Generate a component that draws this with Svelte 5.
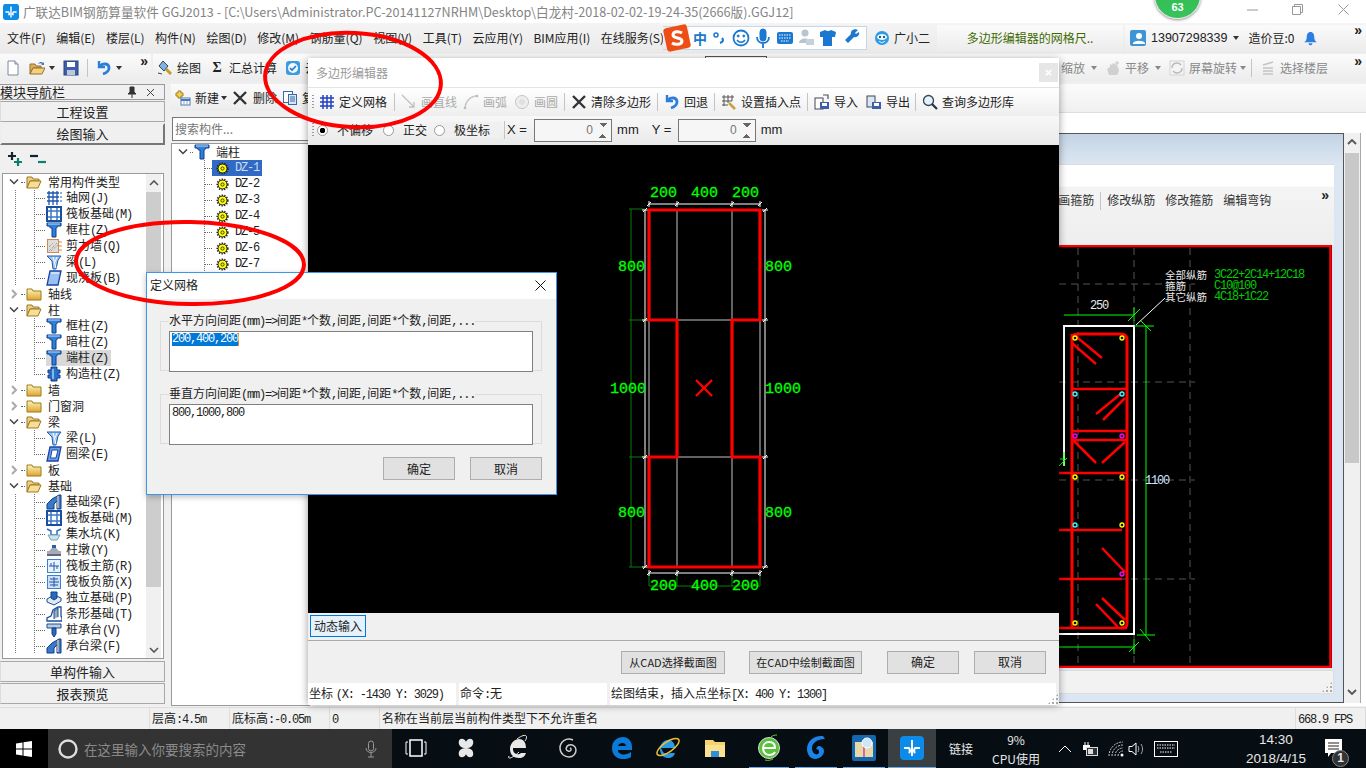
<script>
  const I = {
    col: '<path d="M1 1h14v3h-3l-1.500 2H10v9H6V6H4.500L3 4H1z" fill="#2f7fd6" stroke="#0c3f8f"/><path d="M2 2h12" stroke="#bfe0ff"/>',
    grid: '<path d="M3 1v14M7 1v14M11 1v14M1 3h12M1 7h12M1 11h12" stroke="#1d56b0" stroke-width="1.300" fill="none"/><path d="M15 2v12" stroke="#1d56b0" stroke-dasharray="2 2"/>',
    raft: '<rect x="1" y="1" width="14" height="14" fill="#fff" stroke="#1a4fa0" stroke-width="2"/><path d="M5 2v12M11 2v12M2 5h12M2 11h12" stroke="#3a78c8" stroke-width="1.500"/>',
    wall: '<rect x="1.500" y="1.500" width="11" height="13" fill="#e0dcd8" stroke="#d08a50"/><path d="M3 13l8-8M5 13l7-6M3 9l4-4" stroke="#888" stroke-dasharray="1 1"/><path d="M13 4h3M13 8h3M13 12h3" stroke="#d08a50"/>',
    beam: '<path d="M1 2h14l-3 4-2 9H7L6 7z" fill="#9cc4ee" stroke="#1d5ab0"/><path d="M7 3l3 11M11 3l-2 5" stroke="#fff"/>',
    slab: '<path d="M4 1h11l-3 14H1z" fill="#9cc0f0" stroke="#1744a8" stroke-width="1.300"/><path d="M5 3h8" stroke="#fff"/>',
    ring: '<path d="M4 1h11l-3 14H1z" fill="#6f9fe0" stroke="#1744a8" stroke-width="1.300"/><path d="M6 4h6l-2 8H4.500z" fill="#fff" stroke="#1744a8"/>',
    gzz: '<path d="M5 1h6v3h3v3h-2v2h2v3h-3v3H5v-3H2v-3h2V7H2V4h3z" fill="#2a6fc8" stroke="#0c3f8f"/><path d="M7 3v10" stroke="#dff"/>',
    fbeam: '<path d="M1 15V10l5-5 7-4h2v14h-4V7l-3 3v5z" fill="#3a78c8" stroke="#0c3f8f"/><path d="M12 2v12" stroke="#aaa" stroke-width="2"/>',
    pit: '<path d="M1 3l4 2v4h6V5l4-2" fill="none" stroke="#2a6fc8" stroke-width="1.500"/><path d="M2 9l3 5h6l3-5z" fill="#cfe0f2" stroke="#7aa"/>',
    pier: '<path d="M6 6h4V3H6z" fill="#2a5fa8"/><path d="M3 9l3-3h4l3 3z" fill="#9ab"/><rect x="1" y="9" width="14" height="3" fill="#aab"/><rect x="1" y="12" width="14" height="2" fill="#667"/>',
    zj: '<rect x="1.500" y="1.500" width="13" height="13" fill="#e8f2fc" stroke="#3d7fd0"/><path d="M8 4v9M3 8h10M5 5v3M11 8v3" stroke="#1d56b0" fill="none"/>',
    fj: '<rect x="1.500" y="1.500" width="13" height="13" fill="#cfe0f2" stroke="#3d7fd0"/><path d="M8 3v10M3 8h10M4 5h8M4 11h8" stroke="#1d56b0" fill="none"/>',
    foot: '<path d="M1 9l7-4 7 3v3l-7 4-7-3z" fill="#dfeaf6" stroke="#1d4f9a"/><path d="M5 8V2h6v6l-3 2z" fill="#2d69b8" stroke="#0c3f8f"/>',
    strip: '<path d="M1 15v-3l4-2 2-6 5-3h3v9l1 2v3z" fill="#fff" stroke="#1d4f9a" stroke-width="1.300"/><path d="M8 13V5l4-3v9" fill="#9ab" stroke="#1d4f9a"/>',
    pile: '<path d="M1 2h14v4H1z" fill="#bcd" stroke="#1d4f9a"/><path d="M6 6h4v6l-2 3-2-3z" fill="#2d69b8" stroke="#0c3f8f"/>',
    gear: '<circle cx="8" cy="8" r="5.500" fill="#ff0" stroke="#222" stroke-width="1.200"/><circle cx="8" cy="8" r="6.500" fill="none" stroke="#222" stroke-width="2" stroke-dasharray="1.600 1.600"/><circle cx="8" cy="8" r="2" fill="#ee0" stroke="#222"/>',
    fold: '<path d="M1 3h5l1 2h8v9H1z" fill="url(#fy)" stroke="#a07820"/>',
    open: '<path d="M1 3h5l1 2h6v2H4l-3 7z" fill="#e8d088" stroke="#a07820"/><path d="M4 7h11l-3 7H1z" fill="#f6de98" stroke="#a07820"/>',
    doc: '<path d="M3 1h7l3 3v11H3z" fill="#fff" stroke="#7d8aa0"/><path d="M10 1v3h3" fill="#dde" stroke="#7d8aa0"/>',
    ofold: '<path d="M1 4h5l1 2h5v2H4l-3 6z" fill="#d8b060" stroke="#96702a"/><path d="M4 8h12l-3 6H1z" fill="#f4d07c" stroke="#96702a"/><path d="M9 4c2-3 4-2 5-1l1-1v3h-3l1-1c-1-1-2-1-4 0z" fill="#3a78c8"/>',
    save: '<rect x="1" y="1" width="14" height="14" fill="#3c5fa8" stroke="#27407c"/><rect x="4" y="2" width="8" height="5" fill="#fff"/><rect x="4" y="10" width="8" height="5" fill="#bcc8dc"/>',
    undo: '<path d="M3 1v6h6" fill="none" stroke="#2d7ed6" stroke-width="2.400"/><path d="M4 6c3-3 9-3 9 2 0 3-3 5-6 6" fill="none" stroke="#2d7ed6" stroke-width="2.800"/>',
    brush: '<path d="M2 6l4-5 5 5-4 5z" fill="#7fb2e6" stroke="#345"/><path d="M9 9l5 5" stroke="#c79a2c" stroke-width="3"/><path d="M1 13l4 1" stroke="#345"/>',
    sync: '<rect x="1" y="1" width="14" height="14" rx="3" fill="#3a9be0"/><circle cx="8" cy="8" r="5" fill="#eef7ff"/><path d="M5 8l2 2 4-4" fill="none" stroke="#2277c0" stroke-width="1.600"/>',
    newi: '<path d="M3 1h3v2h2v3H6v2H3V6H1V3h2z" fill="#f0d050" stroke="#a08020"/><rect x="6" y="8" width="9" height="7" fill="#fff" stroke="#4a78b8"/><path d="M6 10h9" stroke="#4a78b8" stroke-width="2"/><path d="M9 11v4M12 11v4" stroke="#9ab"/>',
    del: '<path d="M2 2l12 12M14 2L2 14" stroke="#333" stroke-width="2.400"/>',
    copy: '<rect x="1.500" y="1.500" width="9" height="11" fill="#fff" stroke="#3a68a8"/><rect x="6.500" y="4.500" width="8" height="10" fill="#d8e6f6" stroke="#3a68a8"/><path d="M8 7h5M8 9h5M8 11h5" stroke="#3a68a8"/>',
    dgrid: '<path d="M4 1v14M8 1v14M12 1v14M1 4h14M1 8h14M1 12h14" stroke="#2040c0" stroke-width="1.500" fill="none"/>',
    line: '<path d="M1 1l12 12M13 8v5H8" fill="none" stroke="#c0c0c0" stroke-width="1.300"/>',
    arc: '<path d="M2 15C2 8 7 2 14 2" fill="none" stroke="#c8c8c8" stroke-width="1.500"/><circle cx="14" cy="2" r="1.300" fill="#bbb"/><circle cx="2" cy="14" r="1.300" fill="#bbb"/>',
    circ: '<circle cx="8" cy="8" r="6.500" fill="#eee" stroke="#c4c4c4"/><circle cx="8" cy="8" r="3" fill="#e0e0e0"/>',
    ins: '<path d="M3 1v11M7 1v8M11 1v6M1 3h12M1 7h10M1 11h6" stroke="#555" fill="none"/><path d="M8 9l6 6" stroke="#c9a040" stroke-width="2.500"/>',
    imp: '<rect x="1" y="4" width="8" height="11" fill="#fff" stroke="#445"/><rect x="6" y="8" width="9" height="7" fill="#3c5fa8"/><rect x="8" y="9" width="5" height="3" fill="#fff"/><path d="M9 1h5v4" fill="none" stroke="#456" stroke-width="1.200"/>',
    exp: '<rect x="1" y="2" width="8" height="11" fill="#d8e6f6" stroke="#445"/><rect x="6" y="8" width="9" height="7" fill="#3c5fa8"/><rect x="8" y="9" width="5" height="3" fill="#fff"/>',
    find: '<circle cx="6.500" cy="6.500" r="5" fill="#e6f2fb" stroke="#345" stroke-width="1.300"/><path d="M10 10l5 5" stroke="#234" stroke-width="2.200"/>',
    pan: '<path d="M4 15L2 9l3-2V4l2 1 1-2 2 1 3 3 1 4-2 4z" fill="#d0d0d0"/><path d="M12 1v5M10 3h4" stroke="#c8c8c8"/>',
    rot: '<rect x="1" y="1" width="14" height="14" fill="#f4f4f4" stroke="#d4d4d4"/><path d="M3 8a5 5 0 0 1 9-3M13 8a5 5 0 0 1-9 3" fill="none" stroke="#bbb" stroke-width="1.500"/>',
    floors: '<path d="M3 5l10-3M3 8h10M3 11h10M3 14h10" stroke="#c4c4c4" stroke-width="1.600"/>',
    user: '<rect width="16" height="16" rx="2" fill="#3d95d8"/><circle cx="9" cy="6" r="3" fill="#fff"/><path d="M3 14v-1c2-3 10-3 12 0v1z" fill="#fff"/>'
  };

  const menus = ['文件(F)', '编辑(E)', '楼层(L)', '构件(N)', '绘图(D)', '修改(M)', '钢筋量(Q)', '视图(V)', '工具(T)', '云应用(Y)', 'BIM应用(I)', '在线服务(S)'];

  const nav = [
    { n: '常用构件类型', f: 'open' },
    { n: '轴网', e: '(J)', i: 'grid', g: 1 },
    { n: '筏板基础', e: '(M)', i: 'raft', g: 1 },
    { n: '框柱', e: '(Z)', i: 'col', g: 1 },
    { n: '剪力墙', e: '(Q)', i: 'wall', g: 1 },
    { n: '梁', e: '(L)', i: 'beam', g: 1 },
    { n: '现浇板', e: '(B)', i: 'slab', g: 1, last: 1 },
    { n: '轴线', f: 'fold' },
    { n: '柱', f: 'open' },
    { n: '框柱', e: '(Z)', i: 'col', g: 1 },
    { n: '暗柱', e: '(Z)', i: 'col', g: 1 },
    { n: '端柱', e: '(Z)', i: 'col', g: 1, sel: 1 },
    { n: '构造柱', e: '(Z)', i: 'gzz', g: 1, last: 1 },
    { n: '墙', f: 'fold' },
    { n: '门窗洞', f: 'fold' },
    { n: '梁', f: 'open' },
    { n: '梁', e: '(L)', i: 'beam', g: 1 },
    { n: '圈梁', e: '(E)', i: 'ring', g: 1, last: 1 },
    { n: '板', f: 'fold' },
    { n: '基础', f: 'open' },
    { n: '基础梁', e: '(F)', i: 'fbeam', g: 1 },
    { n: '筏板基础', e: '(M)', i: 'raft', g: 1 },
    { n: '集水坑', e: '(K)', i: 'pit', g: 1 },
    { n: '柱墩', e: '(Y)', i: 'pier', g: 1 },
    { n: '筏板主筋', e: '(R)', i: 'zj', g: 1 },
    { n: '筏板负筋', e: '(X)', i: 'fj', g: 1 },
    { n: '独立基础', e: '(P)', i: 'foot', g: 1 },
    { n: '条形基础', e: '(T)', i: 'strip', g: 1 },
    { n: '桩承台', e: '(V)', i: 'pile', g: 1 },
    { n: '承台梁', e: '(F)', i: 'fbeam', g: 1 }
  ];

  const polyTools = [
    { i: 'dgrid', t: '定义网格', w: 75, sep: 1 },
    { i: 'line', t: '画直线', w: 62, off: 1 },
    { i: 'arc', t: '画弧', w: 51, off: 1 },
    { i: 'circ', t: '画圆', w: 50, off: 1, sep: 1 },
    { i: 'del', t: '清除多边形', w: 86, sep: 1 },
    { i: 'undo', t: '回退', w: 50, sep: 1 },
    { i: 'ins', t: '设置插入点', w: 86, sep: 1 },
    { i: 'imp', t: '导入', w: 52 },
    { i: 'exp', t: '导出', w: 49, sep: 1 },
    { i: 'find', t: '查询多边形库', w: 100 }
  ];

  const dots = [
    [1075, 338, '#ff0'], [1122, 338, '#ff0'], [1075, 394, '#3ff'], [1122, 394, '#3ff'],
    [1075, 436, '#f0f'], [1122, 436, '#f0f'], [1075, 477, '#ff0'], [1122, 477, '#ff0'],
    [1075, 525, '#3ff'], [1122, 525, '#ff0'], [1122, 574, '#f0f'], [1075, 623, '#ff0'], [1122, 623, '#ff0']
  ];
  const bars = [
    [1073, 334, 1102, 358], [1072, 343, 1096, 364], [1123, 392, 1096, 414], [1125, 398, 1103, 420],
    [1073, 440, 1096, 463], [1125, 442, 1102, 463], [1102, 548, 1125, 572], [1102, 598, 1125, 620], [1096, 604, 1118, 627],
    [1072, 389, 1127, 389], [1072, 431, 1127, 431], [1072, 440, 1127, 440], [1059, 473, 1127, 473],
    [1059, 530, 1122, 530], [1059, 579, 1122, 579], [1059, 628, 1127, 628]
  ];
  const tickX = [649, 677, 732, 760];
  const tickY = [210, 320, 457, 567];
</script>

{#snippet icon(name, size = 16)}
  <svg class="ic" viewBox="0 0 16 16" width={size} height={size} aria-hidden="true">{@html I[name]}</svg>
{/snippet}

{#snippet mono(cn, en)}{cn}<span class="m">{en}</span>{/snippet}

<svg class="defs" width="0" height="0" aria-hidden="true">
  <defs>
    <linearGradient id="fy" x1="0" y1="0" x2="0" y2="1"><stop offset="0" stop-color="#fff3b8" /><stop offset="1" stop-color="#dca52e" /></linearGradient>
  </defs>
</svg>

<div class="page">
  <header class="title">
    <svg class="logo" viewBox="0 0 20 20" width="16" height="16">
      <rect width="20" height="20" rx="3" fill="#0d8be8" />
      <path d="M10 3v14M3 10h4a3 3 0 0 1 0 4M17 10h-4a3 3 0 0 0 0 4" fill="none" stroke="#fff" stroke-width="1.800" />
    </svg>
    <span class="title-text">广联达BIM钢筋算量软件 GGJ2013 - [C:\Users\Administrator.PC-20141127NRHM\Desktop\白龙村-2018-02-02-19-24-35(2666版).GGJ12]</span>
    <div class="winbtns">
      <span><svg width="11" height="11"><path d="M0 6h11" stroke="#999" /></svg></span>
      <span><svg width="11" height="11"><path d="M.5 2.500h8v8h-8zM2.500 2.500v-2h8v8h-2" fill="none" stroke="#999" /></svg></span>
      <span><svg width="11" height="11"><path d="M.5.500l10 10M10.500.500l-10 10" stroke="#999" /></svg></span>
    </div>
  </header>

  <nav class="menubar">
    <div class="menus">
      {#each menus as m}<span>{m}</span>{/each}
    </div>
    <div class="ime">
      <svg class="sogou" viewBox="0 0 28 28" width="28" height="28">
        <rect x="2" y="2" width="24" height="24" rx="3" fill="#ee4d16" transform="rotate(-12 14 14)" />
        <path d="M19 9c-3-2-9-2-9 2s9 2 9 6-7 4-10 2" fill="none" stroke="#fff" stroke-width="3" />
      </svg>
      <b class="zh">中</b>
      <svg viewBox="0 0 155 22" width="155" height="22" class="ime-ic">
        <circle cx="9" cy="8" r="2" fill="none" stroke="#1a78d0" stroke-width="1.500" />
        <path d="M15 11c2 2 1 4-2 5" fill="none" stroke="#1a78d0" stroke-width="2.200" />
        <g transform="translate(34 11)" fill="none" stroke="#1a78d0">
          <circle r="7.500" stroke-width="1.800" />
          <path d="M-4 2c2 3 6 3 8 0" stroke-width="1.500" />
          <circle cx="-2.800" cy="-2" r="1" fill="#1a78d0" />
          <circle cx="2.800" cy="-2" r="1" fill="#1a78d0" />
        </g>
        <g transform="translate(56 11)" stroke="#1a78d0" fill="none">
          <rect x="-3" y="-9" width="6" height="12" rx="3" fill="#1a78d0" />
          <path d="M-6-1c0 8 12 8 12 0M0 5v5" stroke-width="1.800" />
        </g>
        <g transform="translate(78 11)">
          <rect x="-8" y="-6" width="16" height="12" rx="2" fill="#1a78d0" />
          <path d="M-6-3H6M-6 0H6M-4 3H4" stroke="#fff" stroke-dasharray="1.500 1" />
        </g>
        <g transform="translate(98 11)">
          <circle cy="-5" r="3.500" fill="#b8c4d0" />
          <path d="M-6 5c0-6 12-6 12 0z" fill="#b8c4d0" />
          <rect x="1" y="1" width="8" height="6" fill="#c8d0d8" />
        </g>
        <path d="M113 5l5-2 2 1h2l2-1 5 2-1 5h-3v9h-9v-9h-3z" fill="#1a78d0" />
        <path d="M151 3l-3 3 1 1 3-2c1 3-2 6-5 5l-6 6-3-3 6-6c-1-3 3-6 7-4z" fill="#1a78d0" />
      </svg>
    </div>
    <div class="xiao">
      <svg viewBox="0 0 16 16" width="16" height="16"><circle cx="8" cy="8" r="7" fill="#2d9be6" /><ellipse cx="8" cy="7" rx="5" ry="3" fill="#e6f6ff" /><circle cx="6" cy="7" r="1" fill="#124" /><circle cx="10" cy="7" r="1" fill="#124" /><path d="M5 11c2 2 4 2 6 0" stroke="#fff" fill="none" /></svg>
      <span>广小二</span>
    </div>
    <div class="tile"><span>多边形编辑器的网格尺..</span></div>
    <div class="account">
      {@render icon('user')}
      <span class="phone">13907298339</span>
      <i class="caret"></i>
      <span class="dou">造价豆:0</span>
      <svg viewBox="0 0 14 16" width="13" height="15" class="bell"><path d="M7 1c-3 0-4 3-4 5 0 3-1 5-3 6h14c-2-1-3-3-3-6 0-2-1-5-4-5z" fill="#2a7fe0" /><path d="M5 13c0 3 4 3 4 0z" fill="#2a7fe0" /></svg>
      <span class="more">»</span>
    </div>
  </nav>

  <div class="toolbar">
    <div class="tband first">
      {@render icon('doc')}
      {@render icon('ofold')}
      <i class="caret"></i>
      {@render icon('save')}
      <i class="sep"></i>
      {@render icon('undo')}
      <i class="caret"></i>
      <span class="more">»</span>
    </div>
    <div class="tband second">
      <span class="tool">{@render icon('brush')}绘图</span>
      <span class="tool"><b class="sigma">Σ</b>汇总计算</span>
      <span class="tool">{@render icon('sync')}云</span>
    </div>
    <div class="tband third">
      <i class="tabstub"></i>
      <span class="tool off">缩放</span><i class="caret lite"></i>
      <span class="tool off">{@render icon('pan')}平移</span><i class="caret lite"></i>
      <span class="tool off">{@render icon('rot')}屏幕旋转</span><i class="caret lite tight"></i>
      <i class="sep"></i>
      <span class="tool off">{@render icon('floors')}选择楼层</span>
      <span class="more">»</span>
    </div>
  </div>

  <main class="work">
    <aside class="nav">
      <div class="navhead">
        <span>模块导航栏</span>
        <svg width="10" height="12" class="pin"><path d="M3 1h4v5l2 2H1l2-2zM5 8v4" fill="#333" stroke="#333" /></svg>
        <svg width="9" height="9" class="pin"><path d="M1 1l7 7M8 1l-7 7" stroke="#444" /></svg>
      </div>
      <button class="navbtn">工程设置</button>
      <button class="navbtn raised">绘图输入</button>
      <div class="pm">
        <svg width="16" height="16"><path d="M5 1v8M1 5h8" stroke="#123" stroke-width="2.200" /><path d="M11 7v8M7 11h8" stroke="#0d7d6f" stroke-width="2.200" /></svg>
        <svg width="16" height="16"><path d="M0 5h8" stroke="#123" stroke-width="2.200" /><path d="M8 11h8" stroke="#0d7d6f" stroke-width="2.200" /></svg>
      </div>
      <div class="navtree">
        <div class="rows">
          {#each nav as r}
            {#if r.f}
              <div class="row folder">
                {#if r.f === 'open'}
                  <svg class="chev" width="10" height="6" viewBox="0 0 10 6"><path d="M1 .5l4 4 4-4" fill="none" stroke="#444" stroke-width="1.500" /></svg>
                {:else}
                  <svg class="chev" width="10" height="10" viewBox="0 0 10 10"><path d="M3 1l4 4-4 4" fill="none" stroke="#aaa" stroke-width="2" /></svg>
                {/if}
                <i class="dash short"></i>
                {@render icon(r.f)}
                <span class="t0">{r.n}</span>
              </div>
            {:else}
              <div class="row leaf" class:last={r.last}>
                <i class="dash"></i>
                <span class="lab" class:sel={r.sel}>{@render icon(r.i)}<span class="t1">{@render mono(r.n, r.e)}</span></span>
              </div>
            {/if}
          {/each}
        </div>
        <div class="vbar">
          <svg width="10" height="6" class="ar"><path d="M1 5l4-4 4 4" fill="none" stroke="#555" stroke-width="1.600" /></svg>
          <div class="thumb"></div>
          <svg width="10" height="6" class="ar"><path d="M1 1l4 4 4-4" fill="none" stroke="#555" stroke-width="1.600" /></svg>
        </div>
      </div>
      <button class="navbtn">单构件输入</button>
      <button class="navbtn">报表预览</button>
    </aside>

    <section class="comp">
      <div class="comp-tb">
        <span class="tool">{@render icon('newi')}新建</span><i class="caret"></i>
        <span class="tool del">{@render icon('del')}删除</span>
        <span class="tool">{@render icon('copy')}复制</span>
      </div>
      <div class="search">搜索构件...</div>
      <div class="comp-tree">
        <div class="comp-root">
          <svg class="chev" width="10" height="6" viewBox="0 0 10 6"><path d="M1 .5l4 4 4-4" fill="none" stroke="#444" stroke-width="1.500" /></svg>
          <i class="dash short2"></i>
          {@render icon('col')}
          <span class="t0">端柱</span>
        </div>
        {#each [1, 2, 3, 4, 5, 6, 7] as n}
          <div class="comp-row">
            <i class="dash"></i>
            <span class="dz" class:dzsel={n === 1}>{@render icon('gear', 13)}<span class="m">DZ-{n}</span></span>
          </div>
        {/each}
      </div>
    </section>

    <section class="rest">
      <div class="rtop"></div>
      <div class="rgap"></div>
      <div class="frame">
        <div class="pane">
          <div class="panehead"></div>
          <div class="panetb">
            <span>画箍筋</span><i class="sep"></i><span>修改纵筋</span><span>修改箍筋</span><span>编辑弯钩</span>
            <span class="more">»</span>
          </div>
          <svg class="cad" viewBox="310 245 1022 423" width="1022" height="423">
            <rect x="310" y="245" width="1022" height="423" fill="#000" />
            <g stroke="#555" stroke-dasharray="7 5" fill="none">
              <path d="M1078 248v417M1134 248v417M1190 248v417" />
              <path d="M1059 284h136M1059 382h136M1059 480h136M1059 579h136" />
            </g>
            <path d="M1064 466V326h70v308h-75" fill="none" stroke="#fff" stroke-width="2" />
            <path d="M1072 340c0-4 2-6 6-6h43c4 0 6 2 6 6v284c0 3-2 4-6 4M1072 334v294" fill="none" stroke="#f00" stroke-width="3" />
            {#each bars as b}
              <line x1={b[0]} y1={b[1]} x2={b[2]} y2={b[3]} stroke="#f00" stroke-width="2.500" />
            {/each}
            {#each dots as d}
              <circle cx={d[0]} cy={d[1]} r="2" fill="#111" stroke={d[2]} stroke-width="1.300" />
            {/each}
            <g stroke="#0f0" fill="none">
              <path d="M1064 315h70M1134 307v14M1128 321l12-12M1060 459h4M1064 452v14M1059 466l8-8" />
              <path d="M1146 326v309M1134 326h20M1141 321l10 10M1137 635h18M1140 629l10 12" />
              <path d="M1059 647h75M1134 639v15M1129 652l10-10" />
            </g>
            <path d="M1136 325l29-27" stroke="#fff" />
            <rect x="300" y="246" width="1030.500" height="421" fill="none" stroke="#f00" stroke-width="2.500" />
            <g class="cadtxt">
              <text x="1090" y="309" fill="#e8e8e8">250</text>
              <text x="1145" y="484" fill="#cfe8ff">1100</text>
              <text x="1214" y="278" fill="#0c0">3C22+2C14+12C18</text>
              <text x="1214" y="289" fill="#0c0">C10@100</text>
              <text x="1214" y="300" fill="#0c0">4C18+1C22</text>
            </g>
            <g class="cadcn" fill="#e8e8e8">
              <text x="1165" y="279">全部纵筋</text>
              <text x="1165" y="290">箍筋</text>
              <text x="1165" y="301">其它纵筋</text>
            </g>
          </svg>
          <div class="panefoot"><i class="grip"></i></div>
        </div>
        <div class="rbar">
          <svg width="10" height="6" class="ar"><path d="M1 5l4-4 4 4" fill="none" stroke="#555" stroke-width="1.800" /></svg>
          <div class="rthumb"></div>
          <svg width="10" height="6" class="ar"><path d="M1 1l4 4 4-4" fill="none" stroke="#555" stroke-width="1.800" /></svg>
        </div>
      </div>
    </section>
  </main>

  <footer class="status">
    <span class="c0"></span>
    <span class="c1">层高<span class="m">:4.5m</span></span>
    <span class="c2">底标高<span class="m">:-0.05m</span></span>
    <span class="c3"><span class="m">0</span></span>
    <span class="c4">名称在当前层当前构件类型下不允许重名</span>
    <span class="c5"><span class="m">668.9 FPS</span></span>
  </footer>

  <div class="taskbar">
    <div class="start">
      <svg width="16" height="16" viewBox="0 0 16 16"><path d="M0 2.500L6.500 1.500V7.500H0zM7.500 1.300L16 0V7.500H7.500zM0 8.500H6.500V14.500L0 13.500zM7.500 8.500H16V16L7.500 14.700z" fill="#fff" /></svg>
    </div>
    <div class="tsearch">
      <svg width="22" height="22"><circle cx="11" cy="11" r="8.500" fill="none" stroke="#ddd" stroke-width="2.400" /></svg>
      <span>在这里输入你要搜索的内容</span>
      <svg class="tmic" width="12" height="18" viewBox="0 0 12 18"><rect x="3.500" y="1" width="5" height="10" rx="2.500" fill="none" stroke="#999" /><path d="M1 8c0 6 10 6 10 0M6 13v4M3 17h6" fill="none" stroke="#999" /></svg>
    </div>
    <div class="apps">
      <span class="app"><svg width="22" height="18" viewBox="0 0 22 18"><rect x="5" y="1" width="12" height="16" fill="none" stroke="#fff" stroke-width="1.500" /><path d="M3 3H1v12h2M19 3h2v12h-2" fill="none" stroke="#fff" /></svg></span>
      <span class="app"><svg width="22" height="22" viewBox="0 0 22 28"><path d="M11 14C3 14 1 9 2 5s7-4 9 1zM11 14c8 0 10-5 9-9s-7-4-9 1zM11 14c-8 0-10 5-9 9s7 4 9-1zM11 14c8 0 10 5 9 9s-7 4-9-1z" fill="#e8e8e8" /></svg></span>
      <span class="app"><svg width="22" height="28" viewBox="0 0 22 28"><path d="M5 14h14c0-6-3-9-7-9s-9 4-9 10 4 9 9 9c4 0 6-2 7-5h-5c-2 2-7 2-8-3v-2z" fill="#e8e8e8" /><path d="M2 22C0 26 6 24 12 18M10 5c8-6 12-4 8 2" fill="none" stroke="#e8e8e8" /></svg></span>
      <span class="app"><svg width="20" height="22" viewBox="0 0 20 22"><path d="M15 3C8 0 2 5 2 11c0 6 5 9 9 9s7-3 7-7-4-6-7-5-4 5-1 6 4-2 2-3" fill="none" stroke="#ccc" stroke-width="1.500" /></svg></span>
      <span class="app"><svg width="22" height="24" viewBox="0 0 22 24"><path d="M1 12C1 5 6 1 12 1c5 0 9 4 9 10v3H7c0 5 8 6 13 2v5c-6 4-19 3-19-9zm6-2h8c0-4-7-4-8 0z" fill="#0a7bd8" /></svg></span>
      <span class="app"><svg width="24" height="26" viewBox="0 0 24 26"><path d="M5 13h14c0-5-3-8-7-8s-8 4-8 9 3 9 8 9c4 0 6-2 7-5h-5c-2 2-7 1-8-3z" fill="#2a9be6" /><ellipse cx="12" cy="12" rx="13" ry="5" transform="rotate(-35 12 12)" fill="none" stroke="#f0c030" stroke-width="1.500" /></svg></span>
      <span class="app"><svg width="22" height="22" viewBox="0 0 22 22"><path d="M1 3h8l2 2h10v15H1z" fill="#f4d46e" /><path d="M1 8h20v12H1z" fill="#fbe190" /><path d="M7 20v-6h8v6" fill="#2f8fd8" /></svg></span>
      <span class="app on"><svg width="24" height="28" viewBox="0 0 24 28"><circle cx="12" cy="14" r="10.500" fill="#58c23c" stroke="#ddd" /><path d="M6 14h12c0-4-2-6-6-6s-6 3-6 6 2 7 6 7c3 0 5-1 6-3" fill="none" stroke="#fff" stroke-width="2" /><path d="M14 3c2-2 5-2 6-2M8 26c3 1 6 0 8-1" fill="none" stroke="#6c3" /></svg></span>
      <span class="app on"><svg width="24" height="28" viewBox="0 0 24 28"><path d="M19 2c-9-1-16 5-16 13 0 6 4 10 8 10 5 0 9-4 9-8 0-3-3-5-6-5l-2 3c2 0 3 1 3 3s-2 3-4 2-3-3-3-6c0-5 5-9 13-9z" fill="#1a84e8" /></svg></span>
      <span class="app on"><svg width="24" height="26" viewBox="0 0 24 26"><rect width="24" height="26" rx="2" fill="#1568b0" /><rect x="3" y="7" width="18" height="15" fill="#e8d8a8" /><path d="M12 7v15" stroke="#b08" /><circle cx="15" cy="8" r="5" fill="#cfe6f8" stroke="#fff" /></svg></span>
      <span class="app on active"><svg width="24" height="24" viewBox="0 0 24 24"><rect width="24" height="24" rx="4" fill="#0d8be8" /><path d="M12 4v16M4 12h5a4 4 0 0 1 0 5M20 12h-5a4 4 0 0 0 0 5" fill="none" stroke="#fff" stroke-width="2" /></svg></span>
    </div>
    <span class="link">链接</span>
    <span class="cpu"><span>9%</span><span>CPU使用</span></span>
    <div class="tray">
      <svg width="14" height="8"><path d="M1 7l6-6 6 6" fill="none" stroke="#fff" /></svg>
      <svg width="16" height="14"><path d="M3 0v3M6 0v3" stroke="#fff" /><rect x="1" y="3" width="7" height="5" fill="#fff" /><rect x="4.500" y="5.500" width="11" height="8" fill="#333" stroke="#ddd" /><rect x="6" y="7" width="5" height="5" fill="#ddd" /></svg>
      <svg width="16" height="16" viewBox="0 0 16 16"><path d="M1 15A14 14 0 0 1 15 1M4 15A11 11 0 0 1 15 4M7 15a8 8 0 0 1 8-8M10 15a5 5 0 0 1 5-5" fill="none" stroke="#ccc" stroke-dasharray="2 1" /><circle cx="14" cy="14" r="1.500" fill="#fff" /></svg>
      <svg class="vol" width="16" height="14" viewBox="0 0 16 14"><path d="M1 4.500h3l4-3.500v12L4 9.500H1z" fill="none" stroke="#fff" /><path d="M10 4c1 2 1 4 0 6M13 2c2 3 2 7 0 10" fill="none" stroke="#aaa" /></svg>
      <svg width="24" height="16" viewBox="0 0 24 16"><rect x=".5" y=".5" width="23" height="15" fill="none" stroke="#fff" /><path d="M3 4h18M3 7h18M6 11h12" stroke="#fff" stroke-dasharray="1.500 1" /></svg>
    </div>
    <div class="clock"><span>14:30</span><span>2018/4/15</span></div>
    <div class="notify">
      <svg width="17" height="18" viewBox="0 0 17 18"><path d="M0 0h17v14H6l-3 4v-4H0z" fill="#fff" /><path d="M3 4h11M3 7h11M3 10h11" stroke="#222" /></svg>
      <b>1</b>
    </div>
  </div>

  <div class="float-ball"><span>63</span></div>

  <div class="poly">
    <div class="poly-title">
      <span>多边形编辑器</span>
      <span class="poly-x">×</span>
    </div>
    <div class="poly-tb">
      <i class="handle"></i>
      {#each polyTools as t}
        <span class="ptool" class:off={t.off} style:width="{t.w}px">{@render icon(t.i)}{t.t}</span>
        {#if t.sep}<i class="sep"></i>{/if}
      {/each}
    </div>
    <div class="poly-opt">
      <i class="handle"></i>
      <label class="radio"><i class="dot on"></i>不偏移</label>
      <label class="radio"><i class="dot"></i>正交</label>
      <label class="radio polar"><i class="dot"></i>极坐标</label>
      <i class="sep"></i>
      <span class="xy">X =</span>
      <span class="num">0<i class="spin"></i></span>
      <span class="mm">mm</span>
      <span class="xy second-y">Y =</span>
      <span class="num">0<i class="spin"></i></span>
      <span class="mm">mm</span>
    </div>

    <svg class="canvas" viewBox="308 145 751 468" width="751" height="468">
      <rect x="308" y="145" width="751" height="468" fill="#000" />
      <g stroke="#c4c4c4" fill="none">
        <path d="M677 210v357M732 210v357M649 320v137M760 320v137M649 320h111M649 457h111" />
      </g>
      <g stroke="#0a7a0a" fill="none">
        <path d="M631 209v358M629 209h16M629 320h16M629 457h16M629 567h16" />
        <path d="M649 586h111M649 574v12M677 574v12M732 574v12M760 574v12" />
      </g>
      <g stroke="#fff" fill="none">
        <path d="M649 204h111M645 210v357M765 210v357M649 573h111" />
        {#each tickX as x}
          <path d="M{x} 201v6M{x - 2} 206l4-4M{x} 570v6M{x - 2} 575l4-4" />
        {/each}
        {#each tickY as y}
          <path d="M642 {y}h6M643 {y + 2}l4-4M762 {y}h6M763 {y + 2}l4-4" />
        {/each}
      </g>
      <path d="M649 210H760V320H732V457H760V567H649V457H677V320H649Z" fill="none" stroke="#f00" stroke-width="3.200" />
      <path d="M696 380l16 16M712 380l-16 16" stroke="#f00" stroke-width="2.400" />
      <g class="dim" fill="#0f0">
        <text x="650" y="197">200</text><text x="691" y="197">400</text><text x="732" y="197">200</text>
        <text x="618" y="271">800</text><text x="765" y="271">800</text>
        <text x="610" y="393">1000</text><text x="765" y="393">1000</text>
        <text x="618" y="517">800</text><text x="765" y="517">800</text>
        <text x="650" y="590">200</text><text x="691" y="590">400</text><text x="732" y="590">200</text>
      </g>
    </svg>

    <div class="poly-dyn"><button class="dyn">动态输入</button></div>
    <div class="poly-act">
      <button class="wbtn w1">从CAD选择截面图</button>
      <button class="wbtn w2">在CAD中绘制截面图</button>
      <button class="wbtn w3">确定</button>
      <button class="wbtn w3 last-btn">取消</button>
    </div>
    <div class="poly-status">
      <span class="s1">坐标 <span class="m">(X: -1430 Y: 3029)</span></span>
      <span class="s2">命令<span class="m">: </span>无</span>
      <span class="s3">绘图结束，插入点坐标<span class="m">[X: 400 Y: 1300]</span></span>
      <i class="grip"></i>
    </div>
  </div>

  <div class="dlg">
    <div class="dlg-title">
      <span>定义网格</span>
      <svg width="11" height="11"><path d="M.5.500l10 10M10.500.500l-10 10" stroke="#111" /></svg>
    </div>
    <div class="dlg-body">
      <fieldset>
        <legend>水平方向间距<span class="m">(mm)=&gt;</span>间距<span class="m">*</span>个数<span class="m">,</span>间距<span class="m">,</span>间距<span class="m">*</span>个数<span class="m">,</span>间距<span class="m">,...</span></legend>
        <div class="area"><span class="m selected">200,400,200</span></div>
      </fieldset>
      <fieldset>
        <legend>垂直方向间距<span class="m">(mm)=&gt;</span>间距<span class="m">*</span>个数<span class="m">,</span>间距<span class="m">,</span>间距<span class="m">*</span>个数<span class="m">,</span>间距<span class="m">,...</span></legend>
        <div class="area"><span class="m">800,1000,800</span></div>
      </fieldset>
      <div class="dlg-act">
        <button class="wbtn w3">确定</button>
        <button class="wbtn w3">取消</button>
      </div>
    </div>
  </div>

  <svg class="marks" width="1366" height="768" aria-hidden="true">
    <ellipse cx="353" cy="80" rx="88" ry="47" transform="rotate(3 353 80)" fill="none" stroke="#f00" stroke-width="4" />
    <ellipse cx="190" cy="263" rx="114" ry="41" transform="rotate(1 190 263)" fill="none" stroke="#f00" stroke-width="4" />
  </svg>
</div>

<style>
  :global(body) {
    margin: 0;
    overflow: hidden;
    background: #f0f0f0;
  }

  .defs {
    position: absolute;
  }

  .page {
    position: relative;
    width: 1366px;
    height: 768px;
    overflow: hidden;
    display: flex;
    flex-direction: column;
    background: #f0f0f0;
    color: #222;
    font: 12px/16px "Noto Sans CJK SC", "Liberation Sans", sans-serif;
  }

  .m {
    font-family: "Liberation Mono", monospace;
    font-size: 12px;
    letter-spacing: -1.200px;
    white-space: pre;
  }

  .ic {
    flex: none;
    display: block;
  }

  button {
    font: inherit;
    color: inherit;
    padding: 0;
    cursor: default;
  }

  /* title bar */
  .title {
    height: 23px;
    flex: none;
    display: flex;
    align-items: center;
    background: #fff;
  }

  .logo {
    margin: 0 4px 0 3px;
    flex: none;
  }

  .title-text {
    color: #848484;
    font-size: 12.640px;
    white-space: nowrap;
  }

  .winbtns {
    margin-left: auto;
    display: flex;
  }

  .winbtns span {
    width: 45.500px;
    display: flex;
    justify-content: center;
    margin-top: -4px;
  }

  /* menu */
  .menubar {
    height: 30px;
    flex: none;
    display: flex;
    align-items: center;
    background: linear-gradient(#f4f4f4, #eaeaea);
  }

  .menus {
    width: 663px;
    flex: none;
    display: flex;
    overflow: hidden;
    white-space: nowrap;
    padding-left: 7px;
    box-sizing: border-box;
    gap: 10.500px;
    font-size: 12px;
  }

  .menus span {
    flex: none;
  }

  .ime {
    width: 204px;
    height: 24px;
    flex: none;
    box-sizing: border-box;
    display: flex;
    align-items: center;
    background: linear-gradient(90deg, transparent 26px, #fff 26px);
    border: 1px solid #c8d6e6;
    border-left: 0;
  }

  .sogou {
    flex: none;
    margin-right: 2px;
  }

  .zh {
    color: #1a78d0;
    font-size: 14px;
    font-weight: 700;
    flex: none;
    margin-right: 5px;
  }

  .ime-ic {
    flex: none;
    margin-left: -5px;
  }

  .xiao {
    flex: none;
    display: flex;
    align-items: center;
    gap: 4px;
    margin-left: 7px;
    width: 63px;
  }

  .tile {
    width: 186px;
    height: 27px;
    flex: none;
    display: flex;
    align-items: center;
    justify-content: center;
    background: linear-gradient(#fafafa, #ececec);
    color: #3e6b00;
  }

  .account {
    flex: 1;
    display: flex;
    align-items: center;
    height: 27px;
    margin-left: 2px;
    padding-left: 5px;
    background: linear-gradient(#fafafa, #ececec);
  }

  .phone {
    margin-left: 5px;
    font-family: "Liberation Sans", sans-serif;
    font-size: 12.500px;
  }

  .dou {
    margin-left: 9px;
  }

  .bell {
    margin-left: 10px;
  }

  .caret {
    flex: none;
    width: 0;
    height: 0;
    margin-left: 6px;
    border: 3.500px solid transparent;
    border-top: 4px solid #333;
    border-bottom: 0;
  }

  .caret.lite {
    border-top-color: #888;
  }

  .more {
    margin-left: auto;
    margin-right: 4px;
    align-self: flex-start;
    font: 700 14px/10px "Liberation Sans", sans-serif;
    color: #222;
  }

  /* toolbar */
  .toolbar {
    height: 31px;
    flex: none;
    display: flex;
    background: #eeeeee;
  }

  .tband {
    height: 27px;
    margin-top: 1px;
    display: flex;
    align-items: center;
    background: linear-gradient(#fbfbfb, #ececec);
    box-sizing: border-box;
  }

  .first {
    width: 151px;
    padding-left: 5px;
    gap: 8px;
  }

  .first .caret {
    margin-left: -4px;
  }

  .first .more {
    margin-top: 2px;
    margin-right: 3px;
  }

  .sep {
    flex: none;
    width: 1px;
    height: 18px;
    background: #c4c4c4;
  }

  .second {
    width: 157px;
    flex: none;
    margin-left: 2px;
    padding-left: 4px;
    gap: 8px;
    overflow: hidden;
  }

  .third {
    flex: 1;
    min-width: 0;
  }

  .tabstub {
    flex: none;
    align-self: flex-start;
    margin: 2px 294px 0 395px;
    width: 60px;
    height: 3px;
    border: 1px solid #555;
    border-bottom: 0;
    background: #fff;
  }

  .third .tool {
    gap: 4px;
  }

  .third .caret {
    margin: 0 8px 0 6px;
  }

  .third .caret.tight {
    margin: 0 5px 0 3px;
  }

  .third .sep {
    margin-right: 8px;
  }

  .third .more {
    margin-top: 2px;
  }

  .tool {
    display: inline-flex;
    align-items: center;
    gap: 4px;
    white-space: nowrap;
    flex: none;
  }

  .tool.off {
    color: #888;
  }

  .sigma {
    font: 700 14px "Liberation Serif", serif;
    width: 12px;
    margin: 0 2px;
    text-align: center;
  }

  /* main area */
  .work {
    height: 622px;
    flex: none;
    display: flex;
  }

  .nav {
    width: 165px;
    flex: none;
    display: flex;
    flex-direction: column;
    font-size: 12px;
    padding-bottom: 2px;
    box-sizing: border-box;
  }

  .navhead {
    height: 14px;
    flex: none;
    display: flex;
    align-items: center;
    border: 1px solid #999;
    border-left: 0;
    font-size: 13px;
  }

  .navhead span {
    flex: 1;
    color: #222;
  }

  .pin {
    margin-right: 9px;
  }

  .navbtn {
    height: 21px;
    flex: none;
    margin-top: 1px;
    background: #f0f0f0;
    border: 1px solid #a8a8a8;
    border-left-color: #ddd;
    font-size: 13px;
  }

  .raised {
    border: 2px solid;
    border-color: #eee #777 #777 #eee;
    height: 22px;
  }

  .pm {
    height: 28px;
    flex: none;
    display: flex;
    align-items: center;
    gap: 7px;
    padding-left: 7px;
  }

  .navtree {
    flex: 1;
    min-height: 0;
    margin: 0 1px 1px 2px;
    border: 1px solid #999;
    display: flex;
    background: #fff;
    overflow: hidden;
  }

  .rows {
    flex: 1;
    overflow: hidden;
    min-width: 0;
  }

  .row {
    height: 16px;
    display: flex;
    align-items: center;
    white-space: nowrap;
  }

  .folder {
    padding-left: 6px;
  }

  .chev {
    flex: none;
    width: 10px;
  }

  .dash {
    flex: none;
    height: 0;
    width: 11px;
    margin-right: 1px;
    border-top: 1px dotted #666;
  }

  .dash.short {
    width: 4px;
    margin: 0 1px 0 2px;
  }

  .dash.short2 {
    width: 3px;
    margin: 0 1px 0 2px;
  }

  .t0 {
    margin-left: 6px;
    font-size: 12px;
  }

  .leaf {
    padding-left: 31px;
    background-image:
      repeating-linear-gradient(#777 0 1px, transparent 1px 2px),
      repeating-linear-gradient(#777 0 1px, transparent 1px 2px);
    background-size: 1px 100%, 1px 100%;
    background-position: 12px 0, 31px 0;
    background-repeat: no-repeat;
  }

  .leaf.last {
    background-size: 1px 100%, 1px 8px;
  }

  .lab {
    display: inline-flex;
    align-items: center;
    height: 16px;
    padding-right: 3px;
  }

  .lab.sel {
    background: #d9d9d9;
  }

  .t1 {
    margin-left: 4px;
  }

  .vbar {
    width: 15px;
    margin-right: 2px;
    flex: none;
    display: flex;
    flex-direction: column;
    align-items: center;
    background: #f0f0f0;
  }

  .ar {
    flex: none;
    margin: 6px 0;
  }

  .thumb {
    flex: none;
    width: 15px;
    height: 395px;
    background: #cdcdcd;
  }

  .vbar .ar:last-child {
    margin-top: auto;
    margin-bottom: 5px;
  }

  .comp {
    width: 139px;
    flex: none;
    margin-left: 6px;
    display: flex;
    flex-direction: column;
  }

  .comp-tb {
    height: 27px;
    flex: none;
    display: flex;
    align-items: center;
    padding-left: 4px;
    white-space: nowrap;
    overflow: hidden;
    background: linear-gradient(#fbfbfb, #ececec);
  }

  .comp-tb .caret {
    margin: 0 5px 0 2px;
  }

  .comp-tb .del {
    gap: 5px;
    margin-right: 5px;
  }

  .search {
    height: 22px;
    flex: none;
    line-height: 22px;
    margin: 6px 0 2px 1px;
    padding-left: 2px;
    background: #fff;
    border: 1px solid #777;
    color: #777;
    font-size: 12px;
  }

  .comp-tree {
    flex: 1;
    border: 1px solid #999;
    background: #fff;
  }

  .comp-root {
    height: 16px;
    display: flex;
    align-items: center;
    padding-left: 6px;
  }

  .comp-row {
    height: 16px;
    display: flex;
    align-items: center;
    padding-left: 32px;
    background: repeating-linear-gradient(#777 0 1px, transparent 1px 2px) 32px 0/1px 100% no-repeat;
  }

  .comp-row .dash {
    width: 8px;
    margin: 0;
  }

  .dz {
    display: inline-flex;
    align-items: center;
    gap: 6px;
    width: 50px;
    box-sizing: border-box;
    height: 16px;
    padding-left: 4px;
  }

  .dz.dzsel {
    background: #316ac5;
    color: #cde;
  }

  .rest {
    flex: 1;
    min-width: 0;
    display: flex;
    flex-direction: column;
  }

  .rtop {
    height: 28px;
    flex: none;
    background: linear-gradient(#fbfbfb, #f0f0f0);
  }

  .rgap {
    height: 21px;
    flex: none;
    background: #fff;
    border-top: 1px solid #ddd;
    box-sizing: border-box;
  }

  .frame {
    flex: 1;
    display: flex;
    min-height: 0;
    padding-right: 5px;
    background: #fff;
  }

  .pane {
    width: 1034px;
    flex: none;
    height: 570px;
    background: #dce6f2;
    border: 1px solid #555;
    border-left: 0;
    box-sizing: border-box;
  }

  .panehead {
    height: 30px;
    background: linear-gradient(#c3d3e4, #dce6f2);
  }

  .panetb {
    height: 81px;
    width: 1024px;
    box-sizing: border-box;
    background: linear-gradient(#fff 21px, #f4f4f4 22px, #eee);
    border-top: 1px solid #ddd;
    display: flex;
    align-items: flex-start;
    justify-content: flex-end;
    gap: 10px;
    padding: 27px 0 0 0;
    color: #333;
    font-size: 12px;
  }

  .panetb .sep {
    margin: 0 -4px;
  }

  .panetb .more {
    margin: -2px 5px 0 40px;
  }

  .cad {
    display: block;
  }

  .cadtxt text {
    font: 12px "Liberation Mono", monospace;
    letter-spacing: -1.200px;
  }

  .cadcn text {
    font: 10.500px "Noto Sans CJK SC", sans-serif;
  }

  .panefoot {
    height: 24px;
    margin-top: 2px;
    width: 1024px;
    background: #f2f2f2;
    border: 1px solid #ddd;
    box-sizing: border-box;
    display: flex;
    justify-content: flex-end;
    align-items: flex-end;
  }

  .grip {
    width: 12px;
    height: 12px;
    flex: none;
    background: radial-gradient(circle, #aaa 1px, transparent 1.200px) 0 0/4px 4px;
    clip-path: polygon(100% 0, 100% 100%, 0 100%);
  }

  .rbar {
    width: 17px;
    height: 570px;
    flex: none;
    display: flex;
    flex-direction: column;
    align-items: center;
    background: #f0f0f0;
    border-right: 1px solid #aaa;
    box-sizing: border-box;
  }

  .rthumb {
    width: 14px;
    height: 310px;
    background: #c8c8c8;
    margin-top: 2px;
  }

  .rbar .ar:last-child {
    margin-top: auto;
    margin-bottom: 8px;
  }

  /* status bar */
  .status {
    height: 22px;
    flex: none;
    margin-top: 1px;
    display: flex;
    background: #f0f0f0;
    border-top: 1px solid #ddd;
    box-sizing: border-box;
    font-size: 12px;
  }

  .status > span {
    display: block;
    line-height: 20px;
    border-right: 1px solid #ddd;
    box-sizing: border-box;
    padding-left: 2px;
    white-space: nowrap;
  }

  .c0 { width: 150px; }
  .c1 { width: 80px; }
  .c2 { width: 100px; }
  .c3 { width: 50px; }
  .c4 { width: 916px; }
  .c5 { width: 70px; }

  /* taskbar */
  .taskbar {
    height: 40px;
    flex: none;
    display: flex;
    align-items: center;
    background: #070e13;
    color: #e8e8e8;
  }

  .start {
    width: 48px;
    height: 100%;
    flex: none;
    display: flex;
    align-items: center;
    justify-content: center;
    background: #000;
  }

  .tsearch {
    width: 344px;
    height: 100%;
    flex: none;
    display: flex;
    align-items: center;
    box-sizing: border-box;
    padding-left: 9px;
    background: #333;
    color: #8a8a8a;
    font-size: 13.500px;
    gap: 5px;
    white-space: nowrap;
  }

  .tmic {
    margin-left: auto;
    margin-right: 15px;
  }

  .apps {
    flex: none;
    height: 100%;
    display: grid;
    grid-template-columns: 48px 52px 52px 48px 60px 32px 62px 46px 48px 48px 48px;
  }

  .app {
    display: flex;
    align-items: center;
    justify-content: center;
    box-sizing: border-box;
    border-bottom: 2px solid transparent;
    margin: 0 3px;
    min-width: 0;
  }

  .app.on {
    border-bottom-color: #6aa8e8;
  }

  .app.active {
    background: #3a3f42;
    margin: 0;
  }

  .link {
    margin-left: 13px;
    width: 37px;
    flex: none;
    font-size: 12px;
  }

  .cpu {
    width: 60px;
    flex: none;
    display: flex;
    flex-direction: column;
    align-items: center;
    font-size: 12px;
    line-height: 19px;
  }

  .tray {
    display: flex;
    align-items: center;
    gap: 10px;
    margin-left: 12px;
    width: 168px;
    flex: none;
  }

  .vol {
    margin-left: -6px;
  }

  .clock {
    width: 62px;
    flex: none;
    margin-left: 19px;
    display: flex;
    flex-direction: column;
    align-items: center;
    font-size: 13.500px;
    line-height: 19px;
    font-family: "Liberation Sans", sans-serif;
  }

  .notify {
    margin-left: 18px;
    position: relative;
  }

  .notify b {
    position: absolute;
    left: 7px;
    top: 11px;
    width: 17px;
    height: 17px;
    border-radius: 50%;
    background: #333;
    border: 1px solid #888;
    box-sizing: border-box;
    text-align: center;
    font: 700 12px/15px "Liberation Sans", sans-serif;
  }

  /* floating things */
  .float-ball {
    position: absolute;
    left: 1154px;
    top: -28px;
    width: 47px;
    height: 47px;
    box-sizing: border-box;
    border-radius: 50%;
    background: linear-gradient(#2fbc4e, #38c25c);
    border: 1px solid #e4e4e4;
    box-shadow: 0 1px 3px rgba(0, 0, 0, 0.45);
    color: #fff;
    font: 700 11px "Liberation Sans", sans-serif;
    display: flex;
    align-items: flex-end;
    justify-content: center;
    padding-bottom: 5px;
  }

  .poly {
    position: absolute;
    left: 308px;
    top: 58px;
    width: 751px;
    height: 645px;
    display: flex;
    flex-direction: column;
    background: #f0f0f0;
    box-shadow: 0 2px 8px rgba(0, 0, 0, 0.4);
  }

  .poly-title {
    height: 30px;
    flex: none;
    box-sizing: border-box;
    padding-left: 8px;
    display: flex;
    align-items: center;
    background: #fff;
    color: #999;
    border-bottom: 1px solid #e4e4e4;
  }

  .poly-x {
    margin-left: auto;
    margin-right: 1px;
    width: 19px;
    height: 19px;
    background: #e6e6e6;
    color: #fff;
    font: 700 13px/19px "Liberation Sans", sans-serif;
    text-align: center;
  }

  .poly-tb {
    height: 28px;
    flex: none;
    display: flex;
    align-items: center;
    box-sizing: border-box;
    padding-left: 4px;
    background: linear-gradient(#fff, #eeeeee);
  }

  .handle {
    flex: none;
    width: 2px;
    height: 14px;
    margin-right: 5px;
    background: repeating-linear-gradient(#999 0 1px, transparent 1px 3px);
  }

  .poly-opt .handle {
    margin-right: 3px;
  }

  .ptool {
    flex: none;
    display: inline-flex;
    align-items: center;
    gap: 4px;
    white-space: nowrap;
    box-sizing: border-box;
  }

  .ptool.off {
    color: #aaa;
  }

  .poly-tb .sep {
    margin: 0 6px 0 0;
  }

  .poly-opt {
    height: 29px;
    flex: none;
    display: flex;
    align-items: center;
    box-sizing: border-box;
    padding-left: 4px;
    padding-bottom: 1px;
    background: linear-gradient(#f8f8f8, #e9e9e9);
  }

  .radio {
    display: inline-flex;
    align-items: center;
    gap: 9px;
    margin-right: 10px;
  }

  .polar {
    padding-right: 11px;
    margin-right: 3px;
    margin-left: -3px;
    background: #f0f0f0;
  }

  .dot {
    width: 11px;
    height: 11px;
    box-sizing: border-box;
    flex: none;
    border-radius: 50%;
    border: 1px solid #999;
    background: #fff;
  }

  .dot.on {
    background: radial-gradient(circle, #000 2.500px, #fff 3px);
  }

  .xy {
    margin-left: 2px;
    width: 27px;
    flex: none;
    font-family: "Liberation Sans", sans-serif;
    font-size: 13px;
  }

  .second-y {
    margin-left: 13px;
    width: 26px;
  }

  .num {
    flex: none;
    width: 78px;
    height: 23px;
    box-sizing: border-box;
    border: 1px solid #777;
    background: #f6f6f6;
    display: flex;
    align-items: center;
    justify-content: flex-end;
    padding-right: 18px;
    color: #777;
    font-family: "Liberation Sans", sans-serif;
    position: relative;
  }

  .spin {
    position: absolute;
    right: 4px;
    top: 3px;
    width: 8px;
    height: 15px;
    background:
      linear-gradient(45deg, transparent 50%, #666 50%) 0 0/4px 4px no-repeat,
      linear-gradient(-45deg, transparent 50%, #666 50%) 4px 0/4px 4px no-repeat,
      linear-gradient(135deg, transparent 50%, #666 50%) 0 100%/4px 4px no-repeat,
      linear-gradient(-135deg, transparent 50%, #666 50%) 4px 100%/4px 4px no-repeat;
  }

  .mm {
    margin-left: 5px;
    font-family: "Liberation Sans", sans-serif;
    font-size: 13px;
  }

  .canvas {
    flex: none;
    display: block;
  }

  .dim text {
    font: 15px "Liberation Mono", monospace;
    stroke: #0f0;
    stroke-width: 0.300;
  }

  .poly-dyn {
    height: 28px;
    flex: none;
    box-sizing: border-box;
    padding: 2px 0 0 2px;
    border-bottom: 1px solid #aaa;
  }

  .dyn {
    display: block;
    width: 56px;
    height: 22px;
    background: #e5f1fb;
    border: 1px solid #0078d7;
  }

  .poly-act {
    height: 42px;
    flex: none;
    display: flex;
    align-items: center;
    justify-content: flex-end;
    gap: 15px;
    padding-right: 13px;
  }

  .wbtn {
    height: 23px;
    flex: none;
    background: #e1e1e1;
    border: 1px solid #adadad;
    white-space: nowrap;
    font-size: 12px;
  }

  .w1 { width: 104px; font-size: 11px; margin-right: 9px; }
  .w2 { width: 113px; font-size: 11px; margin-right: 10px; }
  .w3 { width: 72px; }

  .poly-status {
    flex: 1;
    display: flex;
    gap: 3px;
    background: #f0f0f0;
    align-items: stretch;
  }

  .poly-status > span {
    background: #fff;
    line-height: 20px;
    white-space: nowrap;
    padding-left: 1px;
    box-sizing: border-box;
  }

  .s1 { width: 148px; }
  .s2 { width: 148px; }
  .s3 { flex: 1; }

  .poly-status .grip {
    margin-top: auto;
    margin-left: -12px;
    z-index: 1;
  }

  .dlg {
    position: absolute;
    left: 146px;
    top: 272px;
    width: 411px;
    height: 223px;
    box-sizing: border-box;
    border: 1px solid #3d97e8;
    background: #f0f0f0;
    box-shadow: 0 2px 6px rgba(0, 0, 0, 0.25);
    display: flex;
    flex-direction: column;
  }

  .dlg-title {
    height: 26px;
    flex: none;
    box-sizing: border-box;
    background: #fff;
    display: flex;
    align-items: center;
    justify-content: space-between;
    padding: 0 10px 2px 3px;
    font-size: 12px;
  }

  .dlg-body {
    flex: 1;
    padding: 15px 14px 0 13px;
    display: flex;
    flex-direction: column;
  }

  fieldset {
    margin: 0 0 16px;
    padding: 0 8px;
    height: 57px;
    box-sizing: border-box;
    border: 1px solid #dcdcdc;
  }

  legend {
    padding: 0;
    font-size: 12px;
    line-height: 12px;
    white-space: nowrap;
  }

  .area {
    height: 41px;
    margin-top: 3px;
    box-sizing: border-box;
    border: 1px solid #808080;
    background: #fff;
    padding: 1px 2px;
    display: flex;
    align-items: flex-start;
    line-height: 14px;
  }

  .selected {
    background: #0078d7;
    color: #fff;
    line-height: 13px;
    border-right: 1px solid #e98a30;
  }

  .dlg-act {
    margin-top: -3px;
    display: flex;
    justify-content: flex-end;
    gap: 15px;
  }

  .marks {
    position: absolute;
    left: 0;
    top: 0;
    pointer-events: none;
  }
</style>
